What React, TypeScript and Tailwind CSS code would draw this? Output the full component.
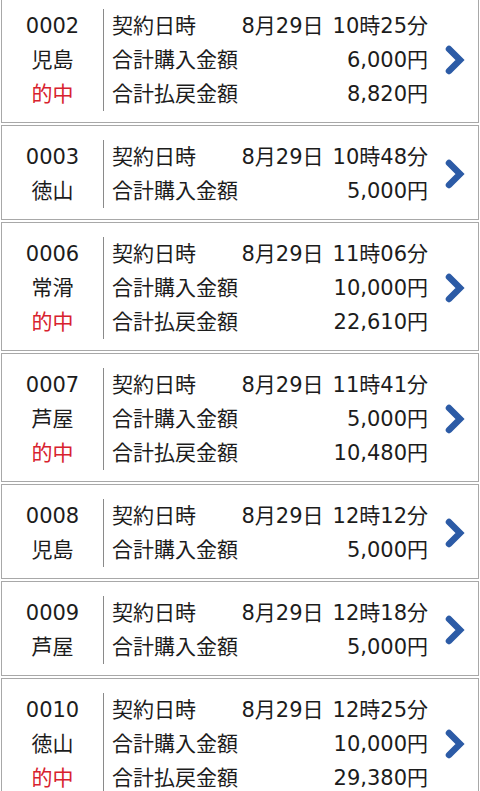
import React from "react";

type Item = {
  no: string;
  place: string;
  hit: boolean;
  time: string;
  buy: string;
  pay?: string;
};

const items: Item[] = [
  { no: "0002", place: "児島", hit: true, time: "10時25分", buy: "6,000円", pay: "8,820円" },
  { no: "0003", place: "徳山", hit: false, time: "10時48分", buy: "5,000円" },
  { no: "0006", place: "常滑", hit: true, time: "11時06分", buy: "10,000円", pay: "22,610円" },
  { no: "0007", place: "芦屋", hit: true, time: "11時41分", buy: "5,000円", pay: "10,480円" },
  { no: "0008", place: "児島", hit: false, time: "12時12分", buy: "5,000円" },
  { no: "0009", place: "芦屋", hit: false, time: "12時18分", buy: "5,000円" },
  { no: "0010", place: "徳山", hit: true, time: "12時25分", buy: "10,000円", pay: "29,380円" },
];

function Chevron() {
  return (
    <svg width="22" height="30" viewBox="0 0 22 30" className="block">
      <polyline
        points="5,4 16,15 5,26"
        fill="none"
        stroke="#2c5ba6"
        strokeWidth="6.5"
        strokeLinecap="round"
        strokeLinejoin="miter"
      />
    </svg>
  );
}

function Card({ item }: { item: Item }) {
  return (
    <div className="mx-[1px] border border-[#a8a8a8] bg-white flex items-center pt-[14px] pb-[11px]">
      <div className="w-[101px] flex flex-col items-center text-[21px] leading-[34px] text-[#1c1c1c]">
        <div>{item.no}</div>
        <div>{item.place}</div>
        {item.hit && <div className="text-[#d8222e]">的中</div>}
      </div>
      <div className="w-[325px] border-l border-[#8a8a8a] pl-[8px] text-[21px] leading-[34px] text-[#1c1c1c]">
        <div className="flex justify-between">
          <span>契約日時</span>
          <span>
            8月29日<span className="inline-block w-[9px]"></span>
            {item.time}
          </span>
        </div>
        <div className="flex justify-between">
          <span>合計購入金額</span>
          <span>{item.buy}</span>
        </div>
        {item.pay && (
          <div className="flex justify-between">
            <span>合計払戻金額</span>
            <span>{item.pay}</span>
          </div>
        )}
      </div>
      <div className="flex-1 flex justify-center pl-[3px]">
        <Chevron />
      </div>
    </div>
  );
}

export default function App() {
  return (
    <div
      className="w-[480px] h-[791px] overflow-hidden bg-white"
      style={{ fontFamily: '"DejaVu Sans", "Noto Sans CJK JP", sans-serif' }}
    >
      <div className="-mt-[6px] flex flex-col gap-[2px]">
        {items.map((it) => (
          <Card key={it.no} item={it} />
        ))}
      </div>
    </div>
  );
}
